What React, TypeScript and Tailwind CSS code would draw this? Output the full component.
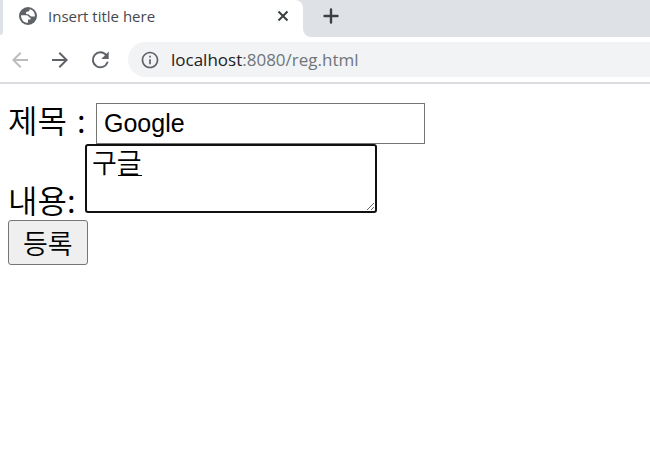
import { MdArrowBack, MdArrowForward, MdInfoOutline } from 'react-icons/md';

function GlobeIcon() {
  return (
    <svg viewBox="0 0 18 18" className="size-[18px] shrink-0" aria-hidden="true">
      <circle cx="9" cy="9" r="9" fill="#5f6368" />
      <path
        d="M2 8.200h5.400c1.700 0 2.600 1 2.600 2.400h1.500v2H9v3.200C5.200 16 1.900 12.800 2 8.200Z"
        fill="#fff"
      />
      <path
        d="M10.600 2.200c.2 1.300-.5 2-1.700 2.200-1.300.1-2 .6-2 1.600s.8 1.300 2 1.300c1.500.1 1.800 2 3.600 2.200h3.400C16.200 5.800 14 2.800 10.600 2.200Z"
        fill="#fff"
      />
    </svg>
  );
}

function CloseIcon() {
  return (
    <svg viewBox="0 0 16 16" className="size-4" fill="none" stroke="currentColor" strokeWidth="2" aria-hidden="true">
      <path d="M3.500 3.500l9 9M12.500 3.500l-9 9" />
    </svg>
  );
}

function PlusIcon() {
  return (
    <svg viewBox="0 0 24 24" className="size-6" fill="none" stroke="currentColor" strokeWidth="2.4" strokeLinecap="round" aria-hidden="true">
      <path d="M12 5.500v13M5.500 12h13" />
    </svg>
  );
}

function ReloadIcon() {
  return (
    <svg viewBox="0 0 24 24" className="size-6" aria-hidden="true">
      <path
        d="M18.300 7.200A7.500 7.500 0 1 0 19.400 14.500"
        fill="none"
        stroke="currentColor"
        strokeWidth="2"
        strokeLinecap="round"
      />
      <path d="M20.700 3.600v7.400h-7.400z" fill="currentColor" />
    </svg>
  );
}

function TabStrip() {
  return (
    <div className="flex h-[37px] bg-white">
      <div className="h-[35px] w-[3px] rounded-br-[3px] bg-[#dee1e6]" />
      <div className="w-[300px] min-w-0 bg-[#dee1e6]">
        <div className="flex h-full items-center rounded-tr-lg bg-white pr-3 pb-[5px] pl-4">
          <GlobeIcon />
          <span className="ml-[11px] grow truncate font-['Open_Sans',sans-serif] text-[15px] text-[#45494d]">
            Insert title here
          </span>
          <button type="button" aria-label="Close tab" className="text-[#3c4043]">
            <CloseIcon />
          </button>
        </div>
      </div>
      <div className="grow rounded-bl-lg bg-[#dee1e6] pt-1 pl-4">
        <button type="button" aria-label="New tab" className="block text-[#3c4043]">
          <PlusIcon />
        </button>
      </div>
    </div>
  );
}

function Toolbar() {
  return (
    <div className="flex items-center border-b-2 border-[#dadce0] py-[5px] pl-2">
      <button type="button" aria-label="Back" disabled className="text-[#babcbe]">
        <MdArrowBack className="size-6" />
      </button>
      <button type="button" aria-label="Forward" className="ml-4 text-[#5f6368]">
        <MdArrowForward className="size-6" />
      </button>
      <button type="button" aria-label="Reload" className="ml-4 text-[#5f6368]">
        <ReloadIcon />
      </button>
      <div className="ml-4 flex h-[35px] grow items-center rounded-l-full bg-[#f1f3f4] pl-3">
        <MdInfoOutline className="size-5 text-[#5f6368]" />
        <span className="ml-[11px] font-['Open_Sans',sans-serif] text-[17px] text-[#70757a]">
          <span className="text-[#202124]">localhost</span>:8080/reg.html
        </span>
      </div>
    </div>
  );
}

export default function App() {
  return (
    <div className="min-h-screen bg-white">
      <TabStrip />
      <Toolbar />
      <form className="px-2 pt-[19px] font-['Noto_Sans_CJK_KR',sans-serif] text-[32px] font-[350] text-black">
        <div className="flex">
          <label htmlFor="title" className="flex w-[88px] gap-[10px] leading-8">
            <span>제목</span>
            <span>:</span>
          </label>
          <input
            id="title"
            type="text"
            defaultValue="Google"
            className="h-[41px] w-[329px] border border-[#767676] bg-white px-[7px] font-['Liberation_Sans',sans-serif] text-[25px] font-normal"
          />
        </div>
        <div className="flex items-end">
          <label htmlFor="content" className="w-[77px] leading-7">
            내용:
          </label>
          <div className="relative">
            <textarea
              id="content"
              defaultValue="구글"
              className="block h-[69px] w-[292px] rounded-[3px] border-2 border-[#101010] bg-white px-[5px] text-[27px] leading-8 outline-none"
            />
            {/* IME composition underline */}
            <span className="pointer-events-none absolute top-[31px] left-[33px] h-px w-6 bg-black" />
          </div>
        </div>
        <button
          type="submit"
          className="mt-[7px] block h-[45px] rounded-[3px] border border-[#767676] bg-[#efefef] px-[14px] text-[27px] leading-10"
        >
          등록
        </button>
      </form>
    </div>
  );
}
